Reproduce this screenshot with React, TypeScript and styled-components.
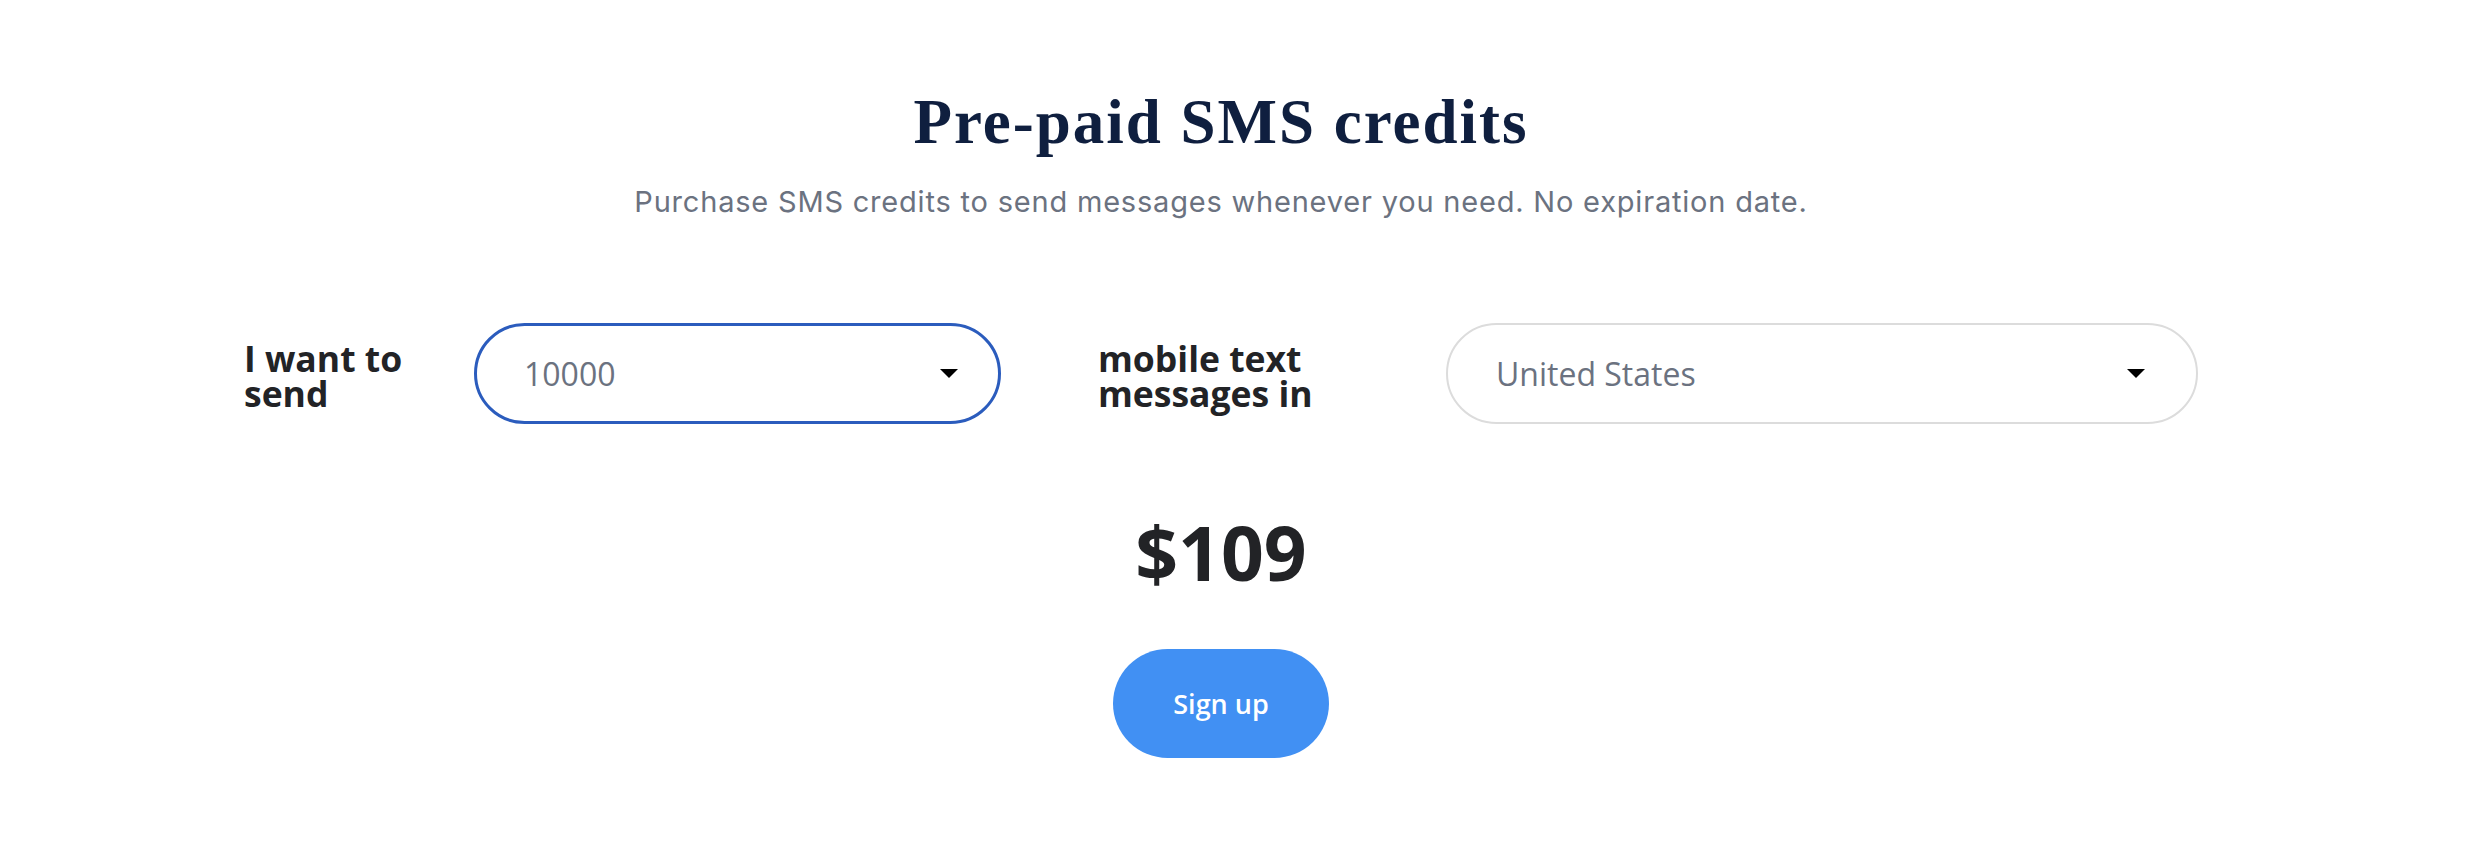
import React from "react";
import styled, { createGlobalStyle } from "styled-components";

const GlobalStyle = createGlobalStyle`
  html, body {
    margin: 0;
    padding: 0;
    background: #ffffff;
  }
  body {
    font-family: "Open Sans", "Liberation Sans", sans-serif;
  }
`;

interface SelectProps {
  value: string;
  width: number;
  caretGap: number;
  active?: boolean;
}

const Select = ({ value, width, caretGap, active }: SelectProps) => {
  return (
    <SelectBox $width={width} $gap={caretGap} $active={active}>
      <SelectValue>{value}</SelectValue>
      <Caret />
    </SelectBox>
  );
};

export default function App() {
  return (
    <Page>
      <GlobalStyle />
      <Title>Pre-paid SMS credits</Title>
      <Subtitle>
        Purchase SMS credits to send messages whenever you need. No expiration date.
      </Subtitle>
      <Row>
        <Label $width={230}>
          I want to
          <br />
          send
        </Label>
        <Select value="10000" width={527} caretGap={40} active />
        <Label $width={348} $offset={97}>
          mobile text
          <br />
          messages in
        </Label>
        <Select value="United States" width={752} caretGap={51} />
      </Row>
      <Price>$109</Price>
      <SignUp>Sign up</SignUp>
    </Page>
  );
}

const Page = styled.div`
  display: flex;
  flex-direction: column;
  align-items: center;
  padding: 91px 26px 80px 0;
`;

const Title = styled.h1`
  margin: 0;
  font-family: "Liberation Serif", "Times New Roman", serif;
  font-weight: 700;
  font-size: 63px;
  line-height: 62px;
  letter-spacing: 2px;
  color: #0f1f3f;
`;

const Subtitle = styled.p`
  margin: 35px 0 0;
  font-family: Inter, "Liberation Sans", Arial, sans-serif;
  font-size: 29px;
  line-height: 28px;
  letter-spacing: 0.8px;
  color: #6b7280;
`;

const Row = styled.div`
  display: flex;
  align-items: center;
  margin-top: 107px;
`;

const Label = styled.div<{ $width: number; $offset?: number }>`
  width: ${(p) => p.$width}px;
  margin-left: ${(p) => p.$offset || 0}px;
  padding-top: 4px;
  flex-shrink: 0;
  font-family: "Open Sans", sans-serif;
  font-weight: 700;
  font-size: 35.5px;
  line-height: 35px;
  color: #222326;
`;

const SelectBox = styled.div<{ $width: number; $gap: number; $active?: boolean }>`
  box-sizing: border-box;
  display: flex;
  align-items: center;
  justify-content: space-between;
  width: ${(p) => p.$width}px;
  height: 101px;
  padding: 0 ${(p) => p.$gap}px 0 ${(p) => (p.$active ? 47 : 48)}px;
  border: ${(p) => (p.$active ? "3px solid #2b5cbd" : "2px solid #dcdcdc")};
  border-radius: 51px;
  background: #ffffff;
`;

const SelectValue = styled.span`
  font-family: "Open Sans", sans-serif;
  font-size: 32px;
  color: #6b7280;
`;

const Caret = styled.span`
  width: 0;
  height: 0;
  border-left: 9.5px solid transparent;
  border-right: 9.5px solid transparent;
  border-top: 9px solid #000000;
`;

const Price = styled.div`
  margin-top: 91px;
  font-family: "Open Sans", sans-serif;
  font-weight: 700;
  font-size: 75px;
  line-height: 75px;
  color: #222326;
`;

const SignUp = styled.button`
  margin-top: 59px;
  width: 216px;
  height: 109px;
  border: none;
  border-radius: 55px;
  background: #4190f3;
  color: #ffffff;
  font-family: "Open Sans", sans-serif;
  font-weight: 600;
  font-size: 27px;
  cursor: pointer;
`;
